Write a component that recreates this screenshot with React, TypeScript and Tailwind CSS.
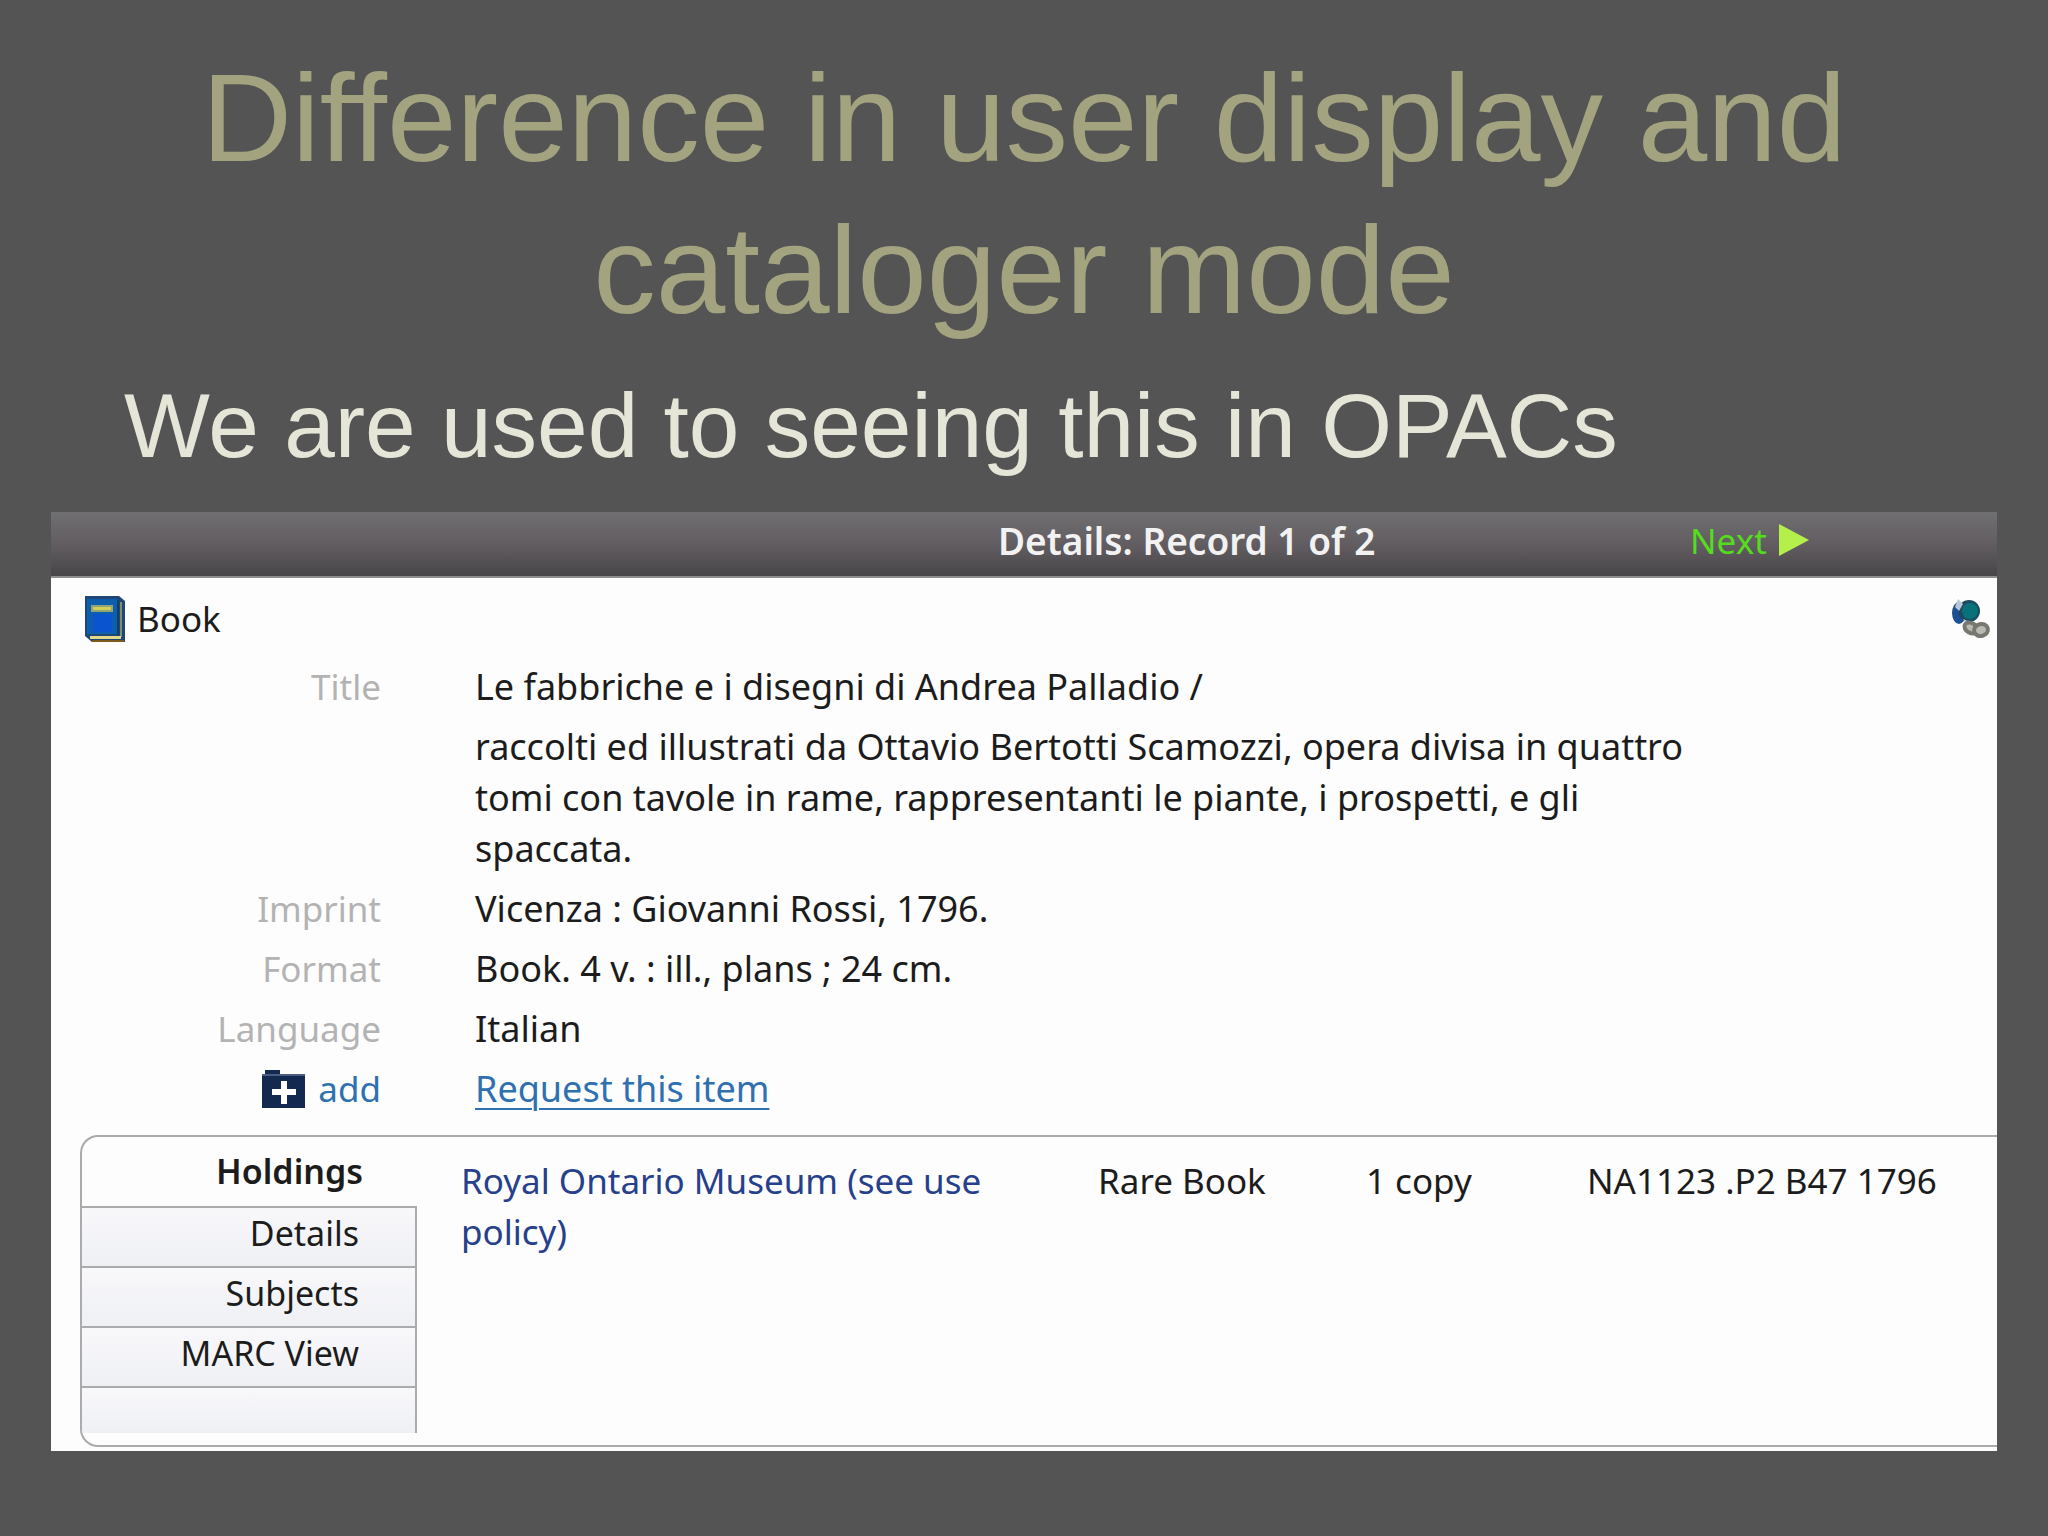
const details = [
  { label: "Title", value: "Le fabbriche e i disegni di Andrea Palladio /" },
  {
    label: "",
    value:
      "raccolti ed illustrati da Ottavio Bertotti Scamozzi, opera divisa in quattro tomi con tavole in rame, rappresentanti le piante, i prospetti, e gli spaccata.",
  },
  { label: "Imprint", value: "Vicenza : Giovanni Rossi, 1796." },
  { label: "Format", value: "Book. 4 v. : ill., plans ; 24 cm." },
  { label: "Language", value: "Italian" },
];

const tabs = ["Details", "Subjects", "MARC View"];

const BookIcon = () => (
  <svg className="h-[46px] w-10 shrink-0" viewBox="0 0 40 46" aria-hidden="true">
    <path d="M0 0H34L40 5V46H7L0 40Z" fill="#1f4775" />
    <path d="M2 3H32V38H2Z" fill="#0d5fae" />
    <path d="M8 18H27V36H8Z" fill="#0a55cf" />
    <path d="M6 9H28V16H6Z" fill="#8fa579" />
    <path d="M8 11H26V14H8Z" fill="#d2cf55" />
    <path d="M33 4V39" stroke="#173c66" strokeWidth="2" />
    <path d="M36 6V41" stroke="#7f8f6c" strokeWidth="2" />
    <path d="M5 41.500H36" stroke="#e3d98a" strokeWidth="3" />
    <path d="M7 45H39" stroke="#7d5a1c" strokeWidth="2" />
  </svg>
);

const FolderPlusIcon = () => (
  <svg className="h-10 w-[45px] shrink-0" viewBox="0 0 45 40" aria-hidden="true">
    <path d="M4 1H19V5H44V39H1V5H4Z" fill="#14294f" />
    <path d="M1 6H44" stroke="#4a5c80" strokeWidth="2" />
    <path d="M23 12V35M11 23H35" stroke="#fff" strokeWidth="6" />
  </svg>
);

const GlobeLinkIcon = () => (
  <svg className="h-10 w-10" viewBox="0 0 40 40" aria-hidden="true">
    <ellipse cx="8" cy="14" rx="7" ry="11" fill="#1f4f94" />
    <circle cx="18" cy="12" r="11" fill="#1d4a63" />
    <circle cx="19" cy="12" r="8" fill="#08717a" />
    <path d="M7 0L12 5L8 12L4 8Z" fill="#b9c6d8" />
    <path d="M12 20L19 23L17 27Z" fill="#b8dcd8" />
    <g fill="#b9bab4" stroke="#777970" strokeWidth="4">
      <ellipse cx="20" cy="29" rx="7" ry="5" transform="rotate(30 20 29)" />
      <ellipse cx="30" cy="31" rx="7" ry="6" transform="rotate(-15 30 31)" />
    </g>
  </svg>
);

const RecordHeader = () => (
  <header className="grid h-[66px] grid-cols-[947fr_692fr_307fr] items-center border-b-2 border-[#908d90] bg-linear-to-b from-[#706f71] via-[#625d61] to-[#484648] pb-2">
    <h2 className="col-start-2 text-[37px] font-semibold text-[#f2f2f2]">Details: Record 1 of 2</h2>
    <a href="#next" className="flex items-center gap-3 text-[#55dc1c]">
      Next
      <svg className="h-8 w-[30px]" viewBox="0 0 30 32" aria-hidden="true">
        <path d="M0 0L30 16L0 32Z" fill="#b4ef4c" />
      </svg>
    </a>
  </header>
);

const RecordDetails = () => (
  <dl className="mt-[17px] grid grid-cols-[330px_1fr] gap-x-[94px] gap-y-[9px]">
    {details.map((row) => (
      <div key={row.value} className="contents">
        <dt className="text-right text-[#b3b3b3]">{row.label}</dt>
        <dd className="max-w-[1240px] text-[36px]">{row.value}</dd>
      </div>
    ))}
    <dt className="flex items-center justify-end">
      <a href="#add" className="flex items-center gap-3 text-[#2f70b0]">
        <FolderPlusIcon />
        add
      </a>
    </dt>
    <dd className="text-[36px]">
      <a href="#request" className="text-[#2f70b0] underline decoration-2 underline-offset-6">
        Request this item
      </a>
    </dd>
  </dl>
);

const Holdings = () => (
  <section className="mt-[21px] ml-[29px] flex h-[312px] rounded-l-[18px] border-y-2 border-l-2 border-[#a9abad] bg-[#fdfdfd]">
    <nav className="flex w-[335px] flex-col overflow-hidden rounded-l-2xl pb-3 text-[34px]">
      <button type="button" className="h-[69px] pr-[54px] text-right font-semibold">
        Holdings
      </button>
      {tabs.map((tab) => (
        <button
          key={tab}
          type="button"
          className="h-[60px] border-t-2 border-r-2 border-[#a9abad] bg-linear-to-b from-[#f8f8fb] to-[#eff0f4] pr-14 pb-2 text-right"
        >
          {tab}
        </button>
      ))}
      <div className="grow border-t-2 border-r-2 border-[#a9abad] bg-linear-to-b from-[#f8f8fb] to-[#eff0f4]" />
    </nav>
    <table className="mt-[18px] ml-11 grow self-start text-left">
      <tbody>
        <tr className="align-top">
          <td className="w-[637px] pr-[90px]">
            <a href="#policy" className="text-[#27408b]">
              Royal Ontario Museum (see use policy)
            </a>
          </td>
          <td className="w-[268px]">Rare Book</td>
          <td className="w-[221px]">1 copy</td>
          <td className="whitespace-nowrap">NA1123 .P2 B47 1796</td>
        </tr>
      </tbody>
    </table>
  </section>
);

const App = () => {
  return (
    <main className="min-h-screen bg-[#545454] px-[51px] pt-[42px] pb-[85px] font-['Liberation_Sans',Arial,sans-serif]">
      <h1 className="mx-auto max-w-[1750px] text-center text-[125px] leading-[152px] text-[#a3a380]">
        Difference in user display and cataloger mode
      </h1>
      <p className="mt-[25px] pl-[73px] text-[91px] leading-[110px] text-[#e6e6d8]">
        We are used to seeing this in OPACs
      </p>

      <article className="mt-[31px] bg-[#fdfdfd] pb-1 font-['Noto_Sans',sans-serif] text-[35px] leading-[51px] text-[#1c1c1c]">
        <RecordHeader />
        <div className="flex items-center justify-between pt-[15px] pr-[6px] pl-[34px]">
          <div className="flex items-center gap-3">
            <BookIcon />
            Book
          </div>
          <a href="#link" aria-label="Link to record">
            <GlobeLinkIcon />
          </a>
        </div>
        <RecordDetails />
        <Holdings />
      </article>
    </main>
  );
};

export default App;
